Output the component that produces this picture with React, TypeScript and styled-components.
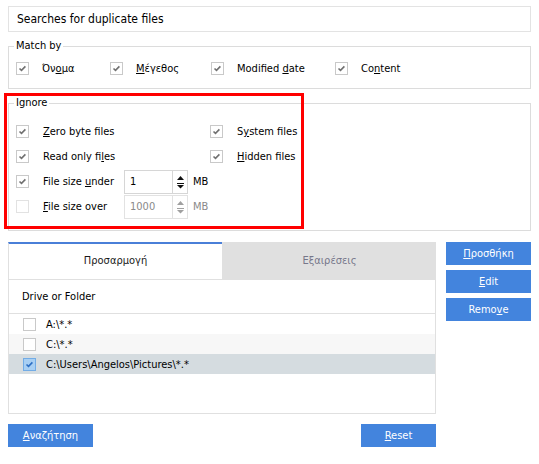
import React from 'react';
import styled, { createGlobalStyle } from 'styled-components';

const FONT = `"DejaVu Sans Condensed", Tahoma, "DejaVu Sans", sans-serif`;

const Global = createGlobalStyle`
  html, body { margin: 0; padding: 0; background: #fff; }
  body { font-family: ${FONT}; font-size: 11px; color: #000; }
  * { box-sizing: border-box; }
`;

const Page = styled.div`
  width: 539px;
  height: 464px;
  padding: 6px 8px 0 8px;
  display: flex;
  flex-direction: column;
`;

const TitleBox = styled.div`
  height: 26px;
  flex: none;
  border: 1px solid #e3e3e3;
  display: flex;
  align-items: center;
  padding-left: 8px;
  font-size: 12px;
`;

const Group = styled.div<{ $h: number }>`
  position: relative;
  flex: none;
  margin-top: 14px;
  height: ${p => p.$h}px;
  border: 1px solid #dcdcdc;
  padding: 15px 0 0 7px;
`;

const Legend = styled.span`
  position: absolute;
  top: -8px;
  left: 5px;
  background: #fff;
  padding: 0 2px;
  line-height: 14px;
`;

const MatchGrid = styled.div`
  display: grid;
  grid-template-columns: 94px 101px 124px auto;
`;

const IgnoreGrid = styled.div`
  display: grid;
  grid-template-columns: 194px auto;
  grid-auto-rows: 25px;
`;

const Item = styled.div`
  display: flex;
  align-items: center;
  gap: 13px;
  height: 13px;
`;

const Row = styled.div`
  display: flex;
  align-items: center;
  gap: 14px;
`;

const Label = styled.span<{ $w?: number }>`
  ${p => (p.$w ? `width: ${p.$w}px;` : '')}
  white-space: nowrap;
`;

const Box = styled.span<{ $blue?: boolean; $dis?: boolean }>`
  width: 13px;
  height: 13px;
  flex: none;
  display: inline-flex;
  align-items: center;
  justify-content: center;
  border: 1px solid ${p => (p.$blue ? '#72ace6' : p.$dis ? '#e2e2e2' : '#c9c9c9')};
  background: ${p => (p.$blue ? '#a8cff3' : '#fff')};
`;

const Red = styled.div`
  position: absolute;
  left: -5px;
  top: -11px;
  width: 300px;
  height: 136px;
  border: 3px solid #ff0000;
  pointer-events: none;
`;

const Spin = styled.div<{ $dis?: boolean }>`
  width: 64px;
  height: 24px;
  border: 1px solid ${p => (p.$dis ? '#e2e2e2' : '#d6d6d6')};
  display: flex;
  color: ${p => (p.$dis ? '#8a8a8a' : '#000')};
`;

const SpinText = styled.div`
  flex: 1;
  padding: 4px 0 0 5px;
`;

const SpinArrows = styled.div<{ $dis?: boolean }>`
  width: 15px;
  border-left: 1px solid ${p => (p.$dis ? '#e2e2e2' : '#d6d6d6')};
  display: flex;
  align-items: center;
  justify-content: center;
`;

const Unit = styled.span<{ $dis?: boolean }>`
  margin-left: 5px;
  color: ${p => (p.$dis ? '#8a8a8a' : '#000')};
`;

const Inline = styled.div`
  display: flex;
  align-items: center;
`;

const Bottom = styled.div`
  margin-top: 11px;
  display: flex;
  gap: 10px;
`;

const Panel = styled.div`
  width: 428px;
  height: 172px;
  border: 1px solid #e0e0e0;
  border-top: none;
  display: flex;
  flex-direction: column;
`;

const Tabs = styled.div`
  display: grid;
  grid-template-columns: 1fr 1fr;
  height: 38px;
  margin: 0 -1px;
  border-bottom: 1px solid #e0e0e0;
`;

const Tab = styled.div<{ $active?: boolean }>`
  display: flex;
  align-items: center;
  justify-content: center;
  background: ${p => (p.$active ? '#fff' : '#e0e0e0')};
  border-top: 2px solid ${p => (p.$active ? '#4a7fd8' : '#e0e0e0')};
  border-left: 1px solid #e0e0e0;
  color: ${p => (p.$active ? '#1a1a1a' : '#77778a')};
  padding-bottom: 2px;
`;

const Header = styled.div`
  height: 34px;
  display: flex;
  align-items: center;
  padding-left: 13px;
  border-bottom: 1px solid #e0e0e0;
`;

const ListRow = styled.div<{ $bg: string }>`
  height: 20px;
  display: flex;
  align-items: center;
  gap: 10px;
  padding-left: 14px;
  background: ${p => p.$bg};
`;

const Side = styled.div`
  width: 85px;
  display: flex;
  flex-direction: column;
  gap: 5px;
`;

const Btn = styled.button<{ $w?: number }>`
  width: ${p => (p.$w ? `${p.$w}px` : '100%')};
  height: 23px;
  border: none;
  background: #4384dd;
  color: #fff;
  font-family: ${FONT};
  font-size: 11px;
  padding: 0;
`;

const Footer = styled.div`
  width: 428px;
  margin-top: 10px;
  display: flex;
  justify-content: space-between;
`;

const Check = ({ checked = true, blue = false, dis = false }: { checked?: boolean; blue?: boolean; dis?: boolean }) => (
  <Box $blue={blue} $dis={dis}>
    {checked && (
      <svg width="11" height="11" viewBox="0 0 11 11">
        <path d="M2.5 5.5 L4.5 7.4 L8.4 3.4" fill="none" stroke={blue ? '#2d6fc4' : '#707070'} strokeWidth="1.6" />
      </svg>
    )}
  </Box>
);

const Arrows = ({ dis }: { dis?: boolean }) => {
  const c = dis ? '#a0a0a0' : '#111';
  return (
    <svg width="9" height="18" viewBox="0 0 9 18">
      <path d="M1 7 L4.5 3 L8 7 Z" fill={c} />
      <rect x="1" y="10" width="7" height="1" fill={c} />
      <path d="M1 12 L8 12 L4.5 15.5 Z" fill={c} />
    </svg>
  );
};

export default function App() {
  return (
    <>
      <Global />
      <Page>
        <TitleBox>Searches for duplicate files</TitleBox>

        <Group $h={43}>
          <Legend>Match by</Legend>
          <MatchGrid>
            <Item><Check /><Label>Όν<u>ο</u>μα</Label></Item>
            <Item><Check /><Label><u>Μ</u>έγεθος</Label></Item>
            <Item><Check /><Label>Modified <u>d</u>ate</Label></Item>
            <Item><Check /><Label>Co<u>n</u>tent</Label></Item>
          </MatchGrid>
        </Group>

        <Group $h={128}>
          <Legend>Ignore</Legend>
          <Red />
          <IgnoreGrid>
            <Row><Check /><Label><u>Z</u>ero byte files</Label></Row>
            <Row><Check /><Label>S<u>y</u>stem files</Label></Row>
            <Row><Check /><Label>Read only fi<u>l</u>es</Label></Row>
            <Row><Check /><Label><u>H</u>idden files</Label></Row>
            <Row>
              <Check />
              <Inline>
                <Label $w={81}>File size <u>u</u>nder</Label>
                <Spin><SpinText>1</SpinText><SpinArrows><Arrows /></SpinArrows></Spin>
                <Unit>MB</Unit>
              </Inline>
            </Row>
            <div />
            <Row>
              <Check checked={false} dis />
              <Inline>
                <Label $w={81}><u>F</u>ile size over</Label>
                <Spin $dis><SpinText>1000</SpinText><SpinArrows $dis><Arrows dis /></SpinArrows></Spin>
                <Unit $dis>MB</Unit>
              </Inline>
            </Row>
          </IgnoreGrid>
        </Group>

        <Bottom>
          <Panel>
            <Tabs>
              <Tab $active>Προσαρμογή</Tab>
              <Tab>Εξαιρέσεις</Tab>
            </Tabs>
            <Header>Drive or Folder</Header>
            <ListRow $bg="#fff"><Check checked={false} /><span>A:\*.*</span></ListRow>
            <ListRow $bg="#f7f7f7"><Check checked={false} /><span>C:\*.*</span></ListRow>
            <ListRow $bg="#d5dce0"><Check blue /><span>C:\Users\Angelos\Pictures\*.*</span></ListRow>
          </Panel>
          <Side>
            <Btn><u>Π</u>ροσθήκη</Btn>
            <Btn><u>E</u>dit</Btn>
            <Btn>Remo<u>v</u>e</Btn>
          </Side>
        </Bottom>

        <Footer>
          <Btn $w={85}><u>Α</u>ναζήτηση</Btn>
          <Btn $w={75}><u>R</u>eset</Btn>
        </Footer>
      </Page>
    </>
  );
}
